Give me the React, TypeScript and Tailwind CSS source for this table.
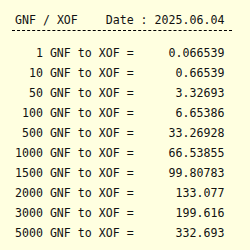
import React from "react";

const ROWS: [string, string][] = [
  ["1", "0.066539"],
  ["10", "0.66539"],
  ["50", "3.32693"],
  ["100", "6.65386"],
  ["500", "33.26928"],
  ["1000", "66.53855"],
  ["1500", "99.80783"],
  ["2000", "133.077"],
  ["3000", "199.616"],
  ["5000", "332.693"],
];

export default function App() {
  return (
    <div className="w-[250px] h-[250px] bg-[#ffffe0] text-[#111] text-[11.6px] font-['DejaVu_Sans_Mono',monospace] pt-[11px] px-[12px] overflow-hidden">
      <div className="w-[220px] h-[20px] border-b border-dashed border-black">
        <div className="w-[30ch] ml-[3px] leading-[19px] flex justify-between whitespace-pre">
          <span>GNF / XOF</span>
          <span>Date : 2025.06.04</span>
        </div>
      </div>
      <div className="mt-[12px] ml-[3px] w-[30ch] flex flex-col">
        {ROWS.map(([amount, value]) => (
          <div key={amount} className="flex leading-[20px] whitespace-pre">
            <span className="w-[4ch] text-right">{amount}</span>
            <span className="w-[13ch]"> GNF to XOF =</span>
            <span className="w-[13ch] text-right">{value}</span>
          </div>
        ))}
      </div>
    </div>
  );
}
